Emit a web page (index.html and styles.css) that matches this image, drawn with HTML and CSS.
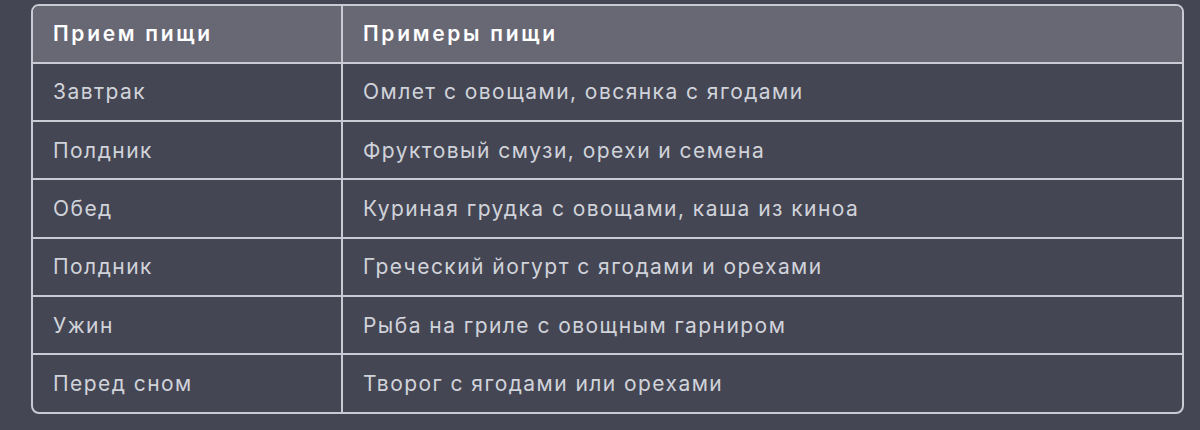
FILE: index.html
```html
<!DOCTYPE html>
<html lang="ru">
<head>
<meta charset="utf-8">
<link rel="stylesheet" href="styles.css">
</head>
<body>
<div class="wrap">
<table class="meals">
<thead>
<tr><th class="c1">Прием пищи</th><th>Примеры пищи</th></tr>
</thead>
<tbody>
<tr><td class="c1">Завтрак</td><td>Омлет с овощами, овсянка с ягодами</td></tr>
<tr><td class="c1">Полдник</td><td>Фруктовый смузи, орехи и семена</td></tr>
<tr><td class="c1">Обед</td><td>Куриная грудка с овощами, каша из киноа</td></tr>
<tr><td class="c1">Полдник</td><td>Греческий йогурт с ягодами и орехами</td></tr>
<tr><td class="c1">Ужин</td><td>Рыба на гриле с овощным гарниром</td></tr>
<tr><td class="c1">Перед сном</td><td>Творог с ягодами или орехами</td></tr>
</tbody>
</table>
</div>
</body>
</html>
```

FILE: styles.css
```css
html, body {
  margin: 0;
  padding: 0;
  background: #444654;
  height: 100%;
}
.wrap {
  padding: 4px 16px 0 31px;
}
.meals {
  width: 1153px;
  border-collapse: separate;
  border-spacing: 0;
  border: 2px solid #c9cad4;
  border-radius: 8px;
  overflow: hidden;
  font-family: Inter, "Noto Sans", sans-serif;
  font-size: 21px;
  letter-spacing: 1.45px;
  color: #d1d3da;
}
.meals th, .meals td {
  text-align: left;
  padding: 0 20px;
  height: 56.4px;
  border-right: 2px solid #c9cad4;
  border-bottom: 2px solid #c9cad4;
}
.meals th:last-child, .meals td:last-child {
  border-right: none;
}
.meals tbody tr:last-child td {
  border-bottom: none;
}
.meals th {
  background: #676874;
  color: #fff;
  font-weight: 600;
  letter-spacing: 2.7px;
  height: 55.5px;
}
.meals .c1 {
  width: 268px;
}
```
